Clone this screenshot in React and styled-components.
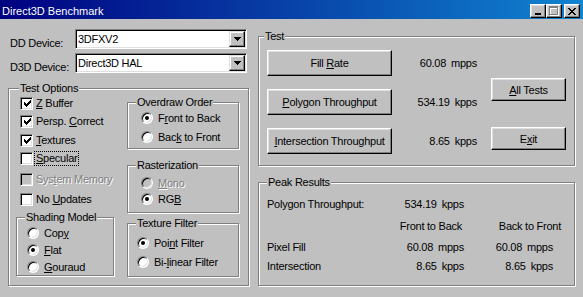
import React from "react";
import styled, { createGlobalStyle } from "styled-components";

const GlobalStyle = createGlobalStyle`
  html, body {
    margin: 0;
    padding: 0;
    background: #c0c0c0;
  }
  body {
    font-family: "Liberation Sans", Arial, sans-serif;
    font-size: 11px;
    letter-spacing: -0.25px;
    color: #000;
  }
`;

const CheckGlyph = () => (
  <svg width="7" height="7" viewBox="0 0 7 7" shapeRendering="crispEdges">
    <path d="M0 2h1v3H0z M1 3h1v3H1z M2 4h1v3H2z M3 3h1v3H3z M4 2h1v3H4z M5 1h1v3H5z M6 0h1v3H6z" fill="#000" />
  </svg>
);

const ArrowGlyph = () => (
  <svg width="7" height="4" viewBox="0 0 7 4" shapeRendering="crispEdges">
    <path d="M0 0h7v1H0z M1 1h5v1H1z M2 2h3v1H2z M3 3h1v1H3z" fill="#000" />
  </svg>
);

const App = () => {
  return (
    <Window>
      <GlobalStyle />
      <TitleBar>
        <Title>Direct3D Benchmark</Title>
        <TitleButton>
          <svg width="8" height="8" viewBox="0 0 8 8" shapeRendering="crispEdges">
            <path d="M1 6h6v2H1z" fill="#000" />
          </svg>
        </TitleButton>
        <TitleButton>
          <svg width="10" height="10" viewBox="0 0 10 10" shapeRendering="crispEdges">
            <path d="M1 1h9v2H1z M1 3h1v7H1z M9 3h1v7H9z M1 9h9v1H1z" fill="#fff" />
            <path d="M0 0h9v2H0z M0 2h1v7H0z M8 2h1v7H8z M0 8h9v1H0z" fill="#808080" />
          </svg>
        </TitleButton>
        <TitleButton $ml={2}>
          <svg width="8" height="7" viewBox="0 0 8 7" shapeRendering="crispEdges">
            <path d="M0 0h2v1H0z M6 0h2v1H6z M1 1h2v1H1z M5 1h2v1H5z M2 2h4v1H2z M3 3h2v1H3z M2 4h4v1H2z M1 5h2v1H1z M5 5h2v1H5z M0 6h2v1H0z M6 6h2v1H6z" fill="#000" />
          </svg>
        </TitleButton>
      </TitleBar>

      <Body>
        <LeftCol>
          <DeviceRow>
            <DeviceLabel>DD Device:</DeviceLabel>
            <Combo>
              <ComboText>3DFXV2</ComboText>
              <DropButton>
                <ArrowGlyph />
              </DropButton>
            </Combo>
          </DeviceRow>
          <DeviceRow $mt={4}>
            <DeviceLabel>D3D Device:</DeviceLabel>
            <Combo>
              <ComboText>Direct3D HAL</ComboText>
              <DropButton>
                <ArrowGlyph />
              </DropButton>
            </Combo>
          </DeviceRow>

          <Group $w={241} $h={198} $mt={15}>
            <Legend $left={10}>Test Options</Legend>
            <OptionsLayout>
              <OptLeft>
                <CheckRow>
                  <CheckBox><CheckGlyph /></CheckBox>
                  <span><u>Z</u> Buffer</span>
                </CheckRow>
                <CheckRow>
                  <CheckBox><CheckGlyph /></CheckBox>
                  <span>Persp. <u>C</u>orrect</span>
                </CheckRow>
                <CheckRow $mt={1}>
                  <CheckBox><CheckGlyph /></CheckBox>
                  <span><u>T</u>extures</span>
                </CheckRow>
                <CheckRow>
                  <CheckBox />
                  <Focused><u>S</u>pecular</Focused>
                </CheckRow>
                <CheckRow $mt={3}>
                  <CheckBox $disabled />
                  <Disabled>Sys<u>t</u>em Memory</Disabled>
                </CheckRow>
                <CheckRow $mt={2}>
                  <CheckBox />
                  <span>No <u>U</u>pdates</span>
                </CheckRow>

                <Group $w={98} $h={59} $mt={9}>
                  <Legend $left={8}>Shading Model</Legend>
                  <RadioList $pt={6} $pl={10}>
                    <RadioRow $h={17}>
                      <Radio />
                      <span>Cop<u>y</u></span>
                    </RadioRow>
                    <RadioRow $h={17}>
                      <Radio $on />
                      <span><u>F</u>lat</span>
                    </RadioRow>
                    <RadioRow $h={17}>
                      <Radio />
                      <span><u>G</u>ouraud</span>
                    </RadioRow>
                  </RadioList>
                </Group>
              </OptLeft>

              <OptRight>
                <Group $w={112} $h={47}>
                  <Legend $left={8}>Overdraw Order</Legend>
                  <RadioList $pt={5} $pl={13}>
                    <RadioRow $h={19}>
                      <Radio $on />
                      <span>F<u>r</u>ont to Back</span>
                    </RadioRow>
                    <RadioRow $h={19}>
                      <Radio />
                      <span>Bac<u>k</u> to Front</span>
                    </RadioRow>
                  </RadioList>
                </Group>

                <Group $w={112} $h={48} $mt={16}>
                  <Legend $left={8}>Rasterization</Legend>
                  <RadioList $pt={9} $pl={13}>
                    <RadioRow $h={16}>
                      <Radio $disabled />
                      <Disabled><u>M</u>ono</Disabled>
                    </RadioRow>
                    <RadioRow $h={16}>
                      <Radio $on />
                      <span>RG<u>B</u></span>
                    </RadioRow>
                  </RadioList>
                </Group>

                <Group $w={112} $h={54} $mt={10}>
                  <Legend $left={8}>Texture Filter</Legend>
                  <RadioList $pt={9} $pl={9}>
                    <RadioRow $h={19}>
                      <Radio $on />
                      <span>Poi<u>n</u>t Filter</span>
                    </RadioRow>
                    <RadioRow $h={19}>
                      <Radio />
                      <span>Bi-<u>l</u>inear Filter</span>
                    </RadioRow>
                  </RadioList>
                </Group>
              </OptRight>
            </OptionsLayout>
          </Group>
        </LeftCol>

        <RightCol>
          <Group $w={317} $h={130}>
            <Legend $left={5}>Test</Legend>
            <TestLayout>
              <TestRows>
                <TestRow>
                  <Button $w={125} $h={26}><span>Fill <u>R</u>ate</span></Button>
                  <Value>60.08<Unit>mpps</Unit></Value>
                </TestRow>
                <TestRow>
                  <Button $w={125} $h={26}><span><u>P</u>olygon Throughput</span></Button>
                  <Value>534.19<Unit>kpps</Unit></Value>
                </TestRow>
                <TestRow>
                  <Button $w={125} $h={26}><span><u>I</u>ntersection Throughput</span></Button>
                  <Value>8.65<Unit>kpps</Unit></Value>
                </TestRow>
              </TestRows>
              <SideButtons>
                <Button $w={75} $h={23}><span><u>A</u>ll Tests</span></Button>
                <Button $w={75} $h={23}><span>E<u>x</u>it</span></Button>
              </SideButtons>
            </TestLayout>
          </Group>

          <Group $w={317} $h={104} $mt={16}>
            <Legend $left={8}>Peak Results</Legend>
            <PeakGrid>
              <Cell>Polygon Throughput:</Cell>
              <Cell $right>534.19<Unit>kpps</Unit></Cell>
              <Cell />

              <Cell />
              <Cell $right $pr={2}>Front to Back</Cell>
              <Cell $right>Back to Front</Cell>

              <Cell>Pixel Fill</Cell>
              <Cell $right>60.08<Unit>mpps</Unit></Cell>
              <Cell $right $pr={8}>60.08<Unit>mpps</Unit></Cell>

              <Cell>Intersection</Cell>
              <Cell $right>8.65<Unit>kpps</Unit></Cell>
              <Cell $right $pr={8}>8.65<Unit>kpps</Unit></Cell>
            </PeakGrid>
          </Group>
        </RightCol>
      </Body>
    </Window>
  );
};
export default App;

const Window = styled.div`
  width: 583px;
  height: 297px;
  overflow: hidden;
  background: #c0c0c0;
`;

const TitleBar = styled.div`
  height: 19px;
  box-sizing: border-box;
  padding: 3px 3px 0 2px;
  display: flex;
  align-items: center;
  background: linear-gradient(90deg, #000080, #1084d0);
  color: #fff;
`;

const Title = styled.div`
  flex: 1;
  font-size: 11px;
  letter-spacing: 0;
  line-height: 12px;
`;

const TitleButton = styled.div`
  width: 16px;
  height: 14px;
  box-sizing: border-box;
  margin-left: ${(p) => p.$ml || 0}px;
  display: flex;
  justify-content: center;
  align-items: center;
  background: #c0c0c0;
  border: 1px solid;
  border-color: #fff #000 #000 #fff;
  box-shadow: inset -1px -1px #808080, inset 1px 1px #dfdfdf;
`;

const Body = styled.div`
  display: flex;
  gap: 9px;
  padding: 10px 0 0 8px;
`;

const LeftCol = styled.div`
  width: 241px;
  display: flex;
  flex-direction: column;
`;

const DeviceRow = styled.div`
  display: flex;
  height: 20px;
  margin-top: ${(p) => p.$mt || 0}px;
`;

const DeviceLabel = styled.div`
  width: 67px;
  box-sizing: border-box;
  padding: 8px 0 0 2px;
  line-height: 12px;
  white-space: nowrap;
`;

const Combo = styled.div`
  width: 172px;
  height: 20px;
  box-sizing: border-box;
  display: flex;
  padding: 1px;
  background: #fff;
  border: 1px solid;
  border-color: #808080 #fff #fff #808080;
  box-shadow: inset 1px 1px #000, inset -1px -1px #dfdfdf;
`;

const ComboText = styled.div`
  flex: 1;
  padding-left: 1px;
  line-height: 16px;
`;

const DropButton = styled.div`
  width: 16px;
  height: 16px;
  box-sizing: border-box;
  display: flex;
  justify-content: center;
  align-items: center;
  background: #c0c0c0;
  border: 1px solid;
  border-color: #dfdfdf #000 #000 #dfdfdf;
  box-shadow: inset -1px -1px #808080, inset 1px 1px #fff;
`;

const Group = styled.div`
  position: relative;
  width: ${(p) => p.$w}px;
  height: ${(p) => p.$h}px;
  margin-top: ${(p) => p.$mt || 0}px;
  box-sizing: border-box;
  flex-shrink: 0;
  border: 1px solid #808080;
  box-shadow: inset 1px 1px #fff, 1px 1px #fff;
`;

const Legend = styled.span`
  position: absolute;
  top: -7px;
  left: ${(p) => p.$left}px;
  padding: 0 1px;
  line-height: 12px;
  background: #c0c0c0;
  white-space: nowrap;
`;

const OptionsLayout = styled.div`
  display: flex;
`;

const OptLeft = styled.div`
  width: 118px;
  box-sizing: border-box;
  padding: 5px 0 0 7px;
  display: flex;
  flex-direction: column;
`;

const OptRight = styled.div`
  width: 112px;
  padding-top: 13px;
  display: flex;
  flex-direction: column;
`;

const CheckRow = styled.div`
  display: flex;
  align-items: center;
  gap: 3px;
  height: 18px;
  margin: ${(p) => p.$mt || 0}px 0 0 4px;
  white-space: nowrap;
`;

const CheckBox = styled.div`
  width: 13px;
  height: 13px;
  box-sizing: border-box;
  flex-shrink: 0;
  display: flex;
  justify-content: center;
  align-items: center;
  padding: 1px 0 0 1px;
  background: ${(p) => (p.$disabled ? "#c0c0c0" : "#fff")};
  border: 1px solid;
  border-color: #808080 #fff #fff #808080;
  box-shadow: inset 1px 1px #000, inset -1px -1px #dfdfdf;
`;

const Focused = styled.span`
  outline: 1px dotted #000;
  outline-offset: 0;
  padding: 0 1px;
  margin-left: -1px;
  line-height: 13px;
`;

const Disabled = styled.span`
  color: #808080;
  text-shadow: 1px 1px 0 #fff;
`;

const RadioList = styled.div`
  display: flex;
  flex-direction: column;
  padding: ${(p) => p.$pt}px 0 0 ${(p) => p.$pl}px;
`;

const RadioRow = styled.div`
  display: flex;
  align-items: center;
  gap: 5px;
  height: ${(p) => p.$h}px;
  white-space: nowrap;
`;

const Radio = styled.div`
  width: 12px;
  height: 12px;
  box-sizing: border-box;
  flex-shrink: 0;
  border-radius: 50%;
  display: flex;
  justify-content: center;
  align-items: center;
  background: ${(p) => (p.$disabled ? "#c0c0c0" : "#fff")};
  border: 1px solid;
  border-color: #808080 #fff #fff #808080;
  box-shadow: inset 1px 1px #000, inset -1px -1px #dfdfdf;

  &::after {
    content: "";
    display: ${(p) => (p.$on ? "block" : "none")};
    width: 4px;
    height: 4px;
    border-radius: 50%;
    background: #000;
  }
`;

const RightCol = styled.div`
  width: 317px;
  margin-top: 7px;
  display: flex;
  flex-direction: column;
`;

const TestLayout = styled.div`
  display: flex;
  padding: 13px 0 0 8px;
`;

const TestRows = styled.div`
  display: flex;
  flex-direction: column;
  gap: 13px;
`;

const TestRow = styled.div`
  display: flex;
  align-items: center;
`;

const Button = styled.div`
  width: ${(p) => p.$w}px;
  height: ${(p) => p.$h}px;
  box-sizing: border-box;
  flex-shrink: 0;
  display: flex;
  justify-content: center;
  align-items: center;
  white-space: nowrap;
  background: #c0c0c0;
  border: 1px solid;
  border-color: #fff #000 #000 #fff;
  box-shadow: inset -1px -1px #808080, inset 1px 1px #dfdfdf;
`;

const Value = styled.div`
  width: 85px;
  text-align: right;
  white-space: nowrap;
`;

const Unit = styled.span`
  margin-left: 5px;
`;

const SideButtons = styled.div`
  display: flex;
  flex-direction: column;
  gap: 26px;
  margin-left: 14px;
  padding-top: 28px;
`;

const PeakGrid = styled.div`
  display: grid;
  grid-template-columns: 132px 65px 97px;
  grid-template-rows: 22px 22px 19px 19px;
  align-items: center;
  padding: 10px 0 0 8px;
`;

const Cell = styled.div`
  white-space: nowrap;
  text-align: ${(p) => (p.$right ? "right" : "left")};
  padding-right: ${(p) => p.$pr || 0}px;
`;
